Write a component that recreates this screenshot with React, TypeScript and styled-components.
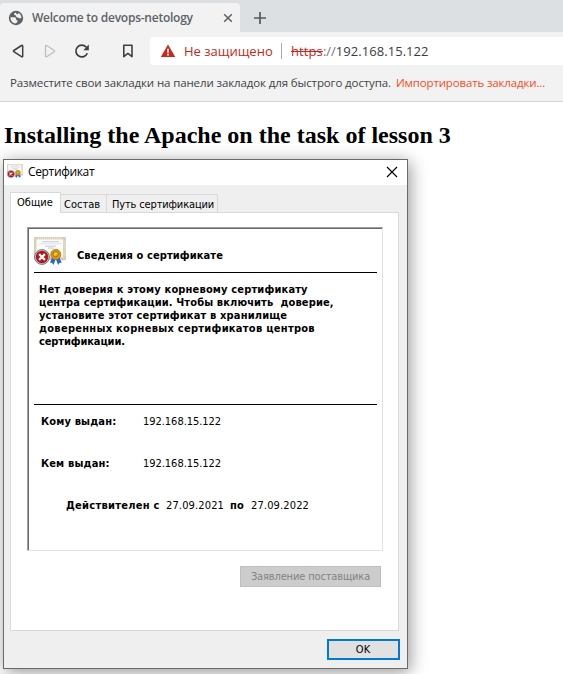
import React from 'react';
import styled, { createGlobalStyle } from 'styled-components';

const Global = createGlobalStyle`
  * { box-sizing: border-box; }
  body { margin: 0; background: #fff; overflow: hidden; }
`;

const Screen = styled.div`
  width: 563px;
  height: 674px;
  overflow: hidden;
  background: #fff;
  font-family: 'Open Sans', 'Noto Sans', sans-serif;
`;

const TabStrip = styled.div`
  display: flex;
  align-items: flex-end;
  height: 32px;
  background: #dce0e3;
`;

const BrowserTab = styled.div`
  display: flex;
  align-items: center;
  width: 240px;
  height: 29px;
  padding: 0 7px 0 8px;
  background: #f2f2f2;
  border-radius: 4px 4px 0 0;
`;

const TabTitle = styled.span`
  flex: 1;
  margin-left: 8px;
  color: #5d6267;
  font-size: 12px;
  font-weight: 600;
  letter-spacing: -0.25px;
  line-height: 18px;
  white-space: nowrap;
`;

const NewTab = styled.div`
  display: flex;
  align-items: center;
  height: 29px;
  padding-left: 13px;
`;

const Toolbar = styled.div`
  display: flex;
  align-items: center;
  height: 38px;
  background: #f2f2f2;
`;

const NavButtons = styled.div`
  display: flex;
  width: 150px;
  svg { display: block; }
`;

const AddressBar = styled.div`
  display: flex;
  align-items: center;
  flex: 1;
  height: 28px;
  padding-left: 10px;
  background: #fff;
  border-radius: 3px 0 0 3px;
  font-size: 13px;
  line-height: 18px;
  white-space: nowrap;
`;

const Insecure = styled.span`
  width: 97px;
  margin-left: 8px;
  color: #c5281c;
`;

const Separator = styled.span`
  width: 1px;
  height: 16px;
  margin-right: 9px;
  background: #a9a9a9;
`;

const Scheme = styled.span`
  color: #c5281c;
  letter-spacing: 0.1px;
  text-decoration: line-through;
`;

const Slashes = styled.span`
  color: #73777a;
`;

const Host = styled.span`
  color: #3b3e40;
  letter-spacing: 0.05px;
`;

const BookmarksBar = styled.div`
  display: flex;
  height: 32px;
  padding: 5px 0 0 10px;
  background: #f2f2f2;
  border-bottom: 1px solid #d5d5d5;
  color: #3f4244;
  font-size: 11.5px;
  line-height: 16px;
  letter-spacing: -0.12px;
  white-space: nowrap;
`;

const ImportLink = styled.span`
  margin-left: 5px;
  color: #fa4b23;
  letter-spacing: -0.15px;
`;

const Heading = styled.h1`
  height: 57px;
  margin: 0;
  padding: 19px 0 0 4px;
  color: #000;
  font: bold 24px/28px 'Liberation Serif', serif;
  white-space: nowrap;
`;

const Dialog = styled.section`
  width: 405px;
  height: 510px;
  margin-left: 3px;
  background: #efefef;
  border: 1px solid #6a6a6a;
  box-shadow: 2px 3px 16px rgba(0, 0, 0, 0.42);
  color: #000;
  font-family: 'DejaVu Sans', sans-serif;
  font-stretch: condensed;
  font-size: 11px;
`;

const TitleBar = styled.header`
  display: flex;
  align-items: center;
  height: 25px;
  padding: 0 9px 1px 3px;
  background: #fff;
`;

const DialogTitle = styled.span`
  flex: 1;
  margin-left: 5px;
  font: 12px/16px 'Open Sans', sans-serif;
  letter-spacing: -0.34px;
`;

const TabRow = styled.div`
  display: flex;
  align-items: flex-end;
  height: 27px;
  padding-left: 6px;
`;

const DialogTab = styled.div<{ $selected?: boolean; $width: number; $tight?: boolean }>`
  width: ${p => p.$width}px;
  height: ${p => (p.$selected ? 21 : 18)}px;
  margin-bottom: ${p => (p.$selected ? -1 : 0)}px;
  padding-top: 3px;
  padding-left: ${p => (p.$selected ? 6 : p.$tight ? 5 : 3)}px;
  background: ${p => (p.$selected ? '#fff' : '#efefef')};
  border: 1px solid #d9d9d9;
  border-bottom: 0;
  border-left-width: ${p => (p.$selected || p.$tight ? 1 : 0)}px;
  border-right-width: ${p => (p.$selected || p.$tight ? 1 : 0)}px;
  line-height: 14px;
  letter-spacing: ${p => (p.$tight ? -0.15 : 0)}px;
  position: ${p => (p.$selected ? 'relative' : 'static')};
  white-space: nowrap;
`;

const Panel = styled.div`
  width: 389px;
  height: 419px;
  margin-left: 6px;
  padding: 14px 0 0 16px;
  background: #fff;
  border: 1px solid #d9d9d9;
`;

const Sheet = styled.div`
  width: 356px;
  height: 324px;
  border: 1px solid #e3e3e3;
  border-top-color: #a0a0a0;
  border-left-color: #a0a0a0;
`;

const SheetInner = styled.div`
  height: 322px;
  padding: 0 5px;
  border-top: 1px solid #696969;
  border-left: 1px solid #696969;
`;

const SheetHeader = styled.div`
  display: flex;
  height: 44px;
  padding-top: 8px;
  border-bottom: 1px solid #000;
`;

const SheetTitle = styled.strong`
  margin: 12px 0 0 11px;
  line-height: 13px;
  letter-spacing: 0.105px;
`;

const Warning = styled.p`
  height: 132px;
  margin: 0;
  padding: 10px 0 0 5px;
  border-bottom: 1px solid #000;
  font-weight: bold;
  line-height: 13px;
`;

const WarningLine = styled.span<{ $spacing: number }>`
  display: block;
  letter-spacing: ${p => p.$spacing}px;
  white-space: pre;
`;

const Field = styled.div`
  display: flex;
  height: 42px;
  padding: 10px 0 0 7px;
  line-height: 13px;
`;

const FieldName = styled.strong`
  width: 102px;
  letter-spacing: 0.16px;
`;

const Value = styled.span`
  letter-spacing: -0.04px;
`;

const Validity = styled.div`
  display: flex;
  padding: 10px 0 0 32px;
  line-height: 13px;
`;

const ValidityWord = styled.strong<{ $width: number }>`
  width: ${p => p.$width}px;
  letter-spacing: 0.28px;
`;

const DateValue = styled.span`
  width: 64px;
  letter-spacing: 0.14px;
`;

const IssuerButton = styled.button`
  display: block;
  width: 141px;
  height: 21px;
  margin: 15px 0 0 213px;
  padding: 1px 0 0;
  background: #ccc;
  border: 1px solid #bfbfbf;
  color: #838383;
  font: inherit;
  line-height: 18px;
  letter-spacing: -0.15px;
`;

const OkButton = styled.button`
  display: block;
  width: 73px;
  height: 21px;
  margin: 8px 0 0 323px;
  padding: 1px 1px 0 0;
  background: #e1e1e1;
  border: 2px solid #0078d7;
  color: #000;
  font: inherit;
  line-height: 16px;
`;

const GlobeIcon = () => (
  <svg width="16" height="16" viewBox="0 0 16 16">
    <circle cx="8" cy="8" r="7.2" fill="#5d6267" />
    <path
      d="M2.5 7.3H6.2Q8.4 7.5 8.2 9.2Q8.2 10.4 9.6 10.5Q10 12.3 7.6 13.5Q3.2 13 2.5 8.8ZM7.5 2.5Q5.6 3.5 6.1 4.8Q7.8 5 8.2 6.2Q8.3 7.8 9.8 7.6Q11.3 8.9 13.4 8.1Q13.4 4.4 10.4 3.1Q10.2 4.4 8.9 4.3Z"
      fill="#f2f2f2"
    />
  </svg>
);

const NavIcons = () => (
  <svg width="150" height="28" viewBox="0 0 150 28" fill="none" stroke="#3c4043" strokeWidth="1.5" strokeLinejoin="round">
    <path d="M22.7 9.1v10q0 1.2-1.2.6l-7.7-5q-.8-.6 0-1.2l7.7-5q1.2-.5 1.2.6z" />
    <path d="M45.5 9.1v10q0 1.2 1.2.6l7.5-5q.8-.6 0-1.2l-7.5-5q-1.2-.5-1.2.6z" stroke="#bcbec0" strokeWidth="1.3" />
    <path d="M86.3 10.2a5.9 5.9 0 1 0 1 6" strokeWidth="1.7" />
    <path d="M88.8 7.6v5.7h-5.5z" fill="#3c4043" stroke="none" />
    <path d="M123.8 8.2h8.2v11.5l-4.1-3.3-4.1 3.3z" strokeWidth="1.6" />
  </svg>
);

const AlertIcon = () => (
  <svg width="16" height="16" viewBox="0 0 16 16">
    <path d="M8 1.4 15.3 14H.8z" fill="#c9281e" />
    <path d="M8 5.7v4M8 10.8v1.8" stroke="#fff" strokeWidth="1.7" />
  </svg>
);

const CertificateIcon = ({ size }: { size: number }) => (
  <svg width={size} height={size} viewBox="0 0 32 32">
    <path d="M.7.7h30.6v22H.7z" fill="#ddd5be" stroke="#cbc2aa" />
    <path d="M2.5 2.5h26.5v17.5h-26.5z" fill="#fbfbf8" />
    <path d="M8 4.7h17M11 9.1h11M14 11h6" stroke="#b4bdd0" strokeWidth=".8" />
    <path d="M5 6.7h23" stroke="#d5dae2" strokeWidth=".8" />
    <path d="M4 1h24M31 4v15" stroke="#f4efdf" strokeDasharray="1 1" />
    <path d="m18.5 19-2.5 7 2-.3 1.4 2.3 2.4-6 2.4 6 1.4-2.3 2 .3-2.6-7z" fill="#2564d5" />
    <circle cx="21.8" cy="17.5" r="5" fill="#d79a16" stroke="#bd7e08" />
    <circle cx="21.6" cy="17.2" r="2.7" fill="#e9ac25" stroke="#a8720c" />
    <path d="m20.3 18.4 1.5-2.3 1.5.5" fill="none" stroke="#ffe77a" />
    <circle cx="8" cy="20" r="7.4" fill="#c3c7c9" stroke="#747a7c" />
    <circle cx="8" cy="20" r="6.2" fill="#b9121d" />
    <path d="m5.1 17.1 5.8 5.8M10.9 17.1l-5.8 5.8" stroke="#fff" strokeWidth="2.2" />
  </svg>
);

const warningLines = [
  { text: 'Нет доверия к этому корневому сертификату', spacing: 0.16 },
  { text: 'центра сертификации. Чтобы включить  доверие,', spacing: 0.12 },
  { text: 'установите этот сертификат в хранилище', spacing: 0.16 },
  { text: 'доверенных корневых сертификатов центров', spacing: 0.28 },
  { text: 'сертификации.', spacing: -0.12 },
];

export default function App() {
  return (
    <Screen>
      <Global />
      <TabStrip>
        <BrowserTab>
          <GlobeIcon />
          <TabTitle>Welcome to devops-netology</TabTitle>
          <svg width="10" height="10" viewBox="0 0 10 10">
            <path d="m1.2 1.2 7.6 7.6M8.8 1.2 1.2 8.8" stroke="#5a5f63" strokeWidth="1.5" />
          </svg>
        </BrowserTab>
        <NewTab>
          <svg width="14" height="14" viewBox="0 0 14 14">
            <path d="M7 1v12M1 7h12" stroke="#54595d" strokeWidth="1.7" />
          </svg>
        </NewTab>
      </TabStrip>
      <Toolbar>
        <NavButtons><NavIcons /></NavButtons>
        <AddressBar>
          <AlertIcon />
          <Insecure>Не защищено</Insecure>
          <Separator />
          <Scheme>https</Scheme>
          <Slashes>://</Slashes>
          <Host>192.168.15.122</Host>
        </AddressBar>
      </Toolbar>
      <BookmarksBar>
        <span>Разместите свои закладки на панели закладок для быстрого доступа.</span>
        <ImportLink>Импортировать закладки...</ImportLink>
      </BookmarksBar>
      <Heading>Installing the Apache on the task of lesson 3</Heading>
      <Dialog>
        <TitleBar>
          <CertificateIcon size={16} />
          <DialogTitle>Сертификат</DialogTitle>
          <svg width="12" height="12" viewBox="0 0 12 12">
            <path d="m1 1 10 10M11 1 1 11" stroke="#000" strokeWidth="1.1" />
          </svg>
        </TitleBar>
        <TabRow>
          <DialogTab $selected $width={51}>Общие</DialogTab>
          <DialogTab $width={45}>Состав</DialogTab>
          <DialogTab $tight $width={112}>Путь сертификации</DialogTab>
        </TabRow>
        <Panel>
          <Sheet>
            <SheetInner>
              <SheetHeader>
                <CertificateIcon size={32} />
                <SheetTitle>Сведения о сертификате</SheetTitle>
              </SheetHeader>
              <Warning>
                {warningLines.map(line => (
                  <WarningLine key={line.text} $spacing={line.spacing}>{line.text}</WarningLine>
                ))}
              </Warning>
              <Field>
                <FieldName>Кому выдан:</FieldName>
                <Value>192.168.15.122</Value>
              </Field>
              <Field>
                <FieldName>Кем выдан:</FieldName>
                <Value>192.168.15.122</Value>
              </Field>
              <Validity>
                <ValidityWord $width={100}>Действителен с</ValidityWord>
                <DateValue>27.09.2021</DateValue>
                <ValidityWord $width={21}>по</ValidityWord>
                <DateValue>27.09.2022</DateValue>
              </Validity>
            </SheetInner>
          </Sheet>
          <IssuerButton disabled>Заявление поставщика</IssuerButton>
        </Panel>
        <OkButton>OK</OkButton>
      </Dialog>
    </Screen>
  );
}
